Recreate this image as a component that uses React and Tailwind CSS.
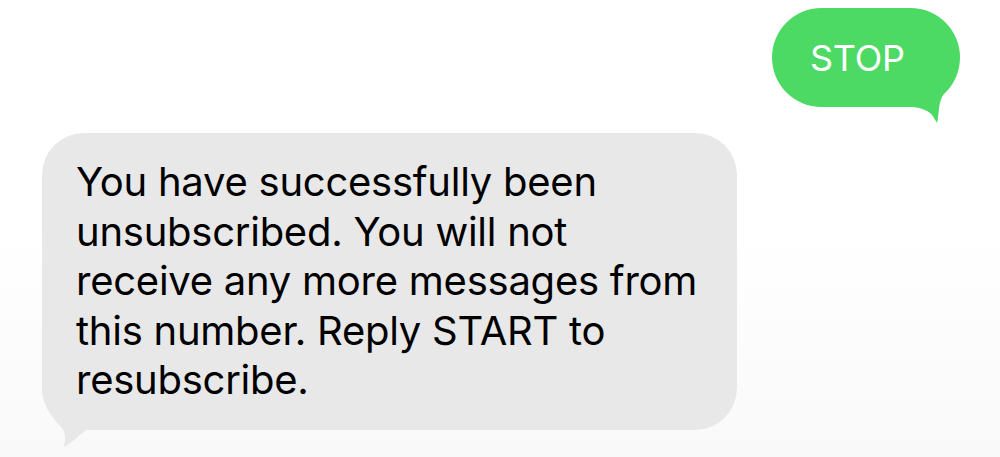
import React from 'react';

const GREEN = '#4cd964';
const GRAY = '#e8e8e8';

// Outgoing bubble (right side, green)
const SentBubble = ({ text }) => (
  <div className="relative self-end mr-[40px] mt-[8px] h-[99px] w-[188px] rounded-full bg-[#4cd964] flex items-center pl-[38px]">
    <svg className="absolute right-0 top-[42px]" width="60" height="75" viewBox="0 0 60 75">
      <path
        d="M0 22 L56 22 C52 32 46 40 42 47 C38 55 39 66 37 73 C36 71 34 68 32 65 C29 61 22 58 13 57 L0 57 Z"
        fill={GREEN}
      />
    </svg>
    <span className="relative text-white text-[36px] leading-none tracking-[-0.3px]">{text}</span>
  </div>
);

// Incoming bubble (left side, gray)
const ReceivedBubble = ({ lines }) => (
  <div className="relative ml-[42px] mt-[26px] w-[695px] rounded-[42px] bg-[#e8e8e8] pl-[34px] pr-[20px] pt-[24px] pb-[25px]">
    <svg className="absolute left-0 top-[247px]" width="60" height="67" viewBox="0 0 60 67">
      <path
        d="M0 0 L0 10 C2 30 13 40 20 48 C24 54 24 62 21 67 C28 65 35 57 44 50 L58 50 L58 0 Z"
        fill={GRAY}
      />
    </svg>
    <p className="relative text-black text-[40px] leading-[49.5px] tracking-[-0.25px]">
      {lines.map((l, i) => (
        <React.Fragment key={i}>
          {l}
          {i < lines.length - 1 && <br />}
        </React.Fragment>
      ))}
    </p>
  </div>
);

export default function App() {
  return (
    <div
      className="w-full h-[457px] overflow-hidden flex flex-col bg-gradient-to-b from-white via-white to-[#f9f9f9]"
      style={{ fontFamily: 'Inter, "Noto Sans", sans-serif' }}
    >
      <SentBubble text="STOP" />
      <ReceivedBubble
        lines={[
          'You have successfully been',
          'unsubscribed. You will not',
          'receive any more messages from',
          'this number. Reply START to',
          'resubscribe.',
        ]}
      />
    </div>
  );
}
